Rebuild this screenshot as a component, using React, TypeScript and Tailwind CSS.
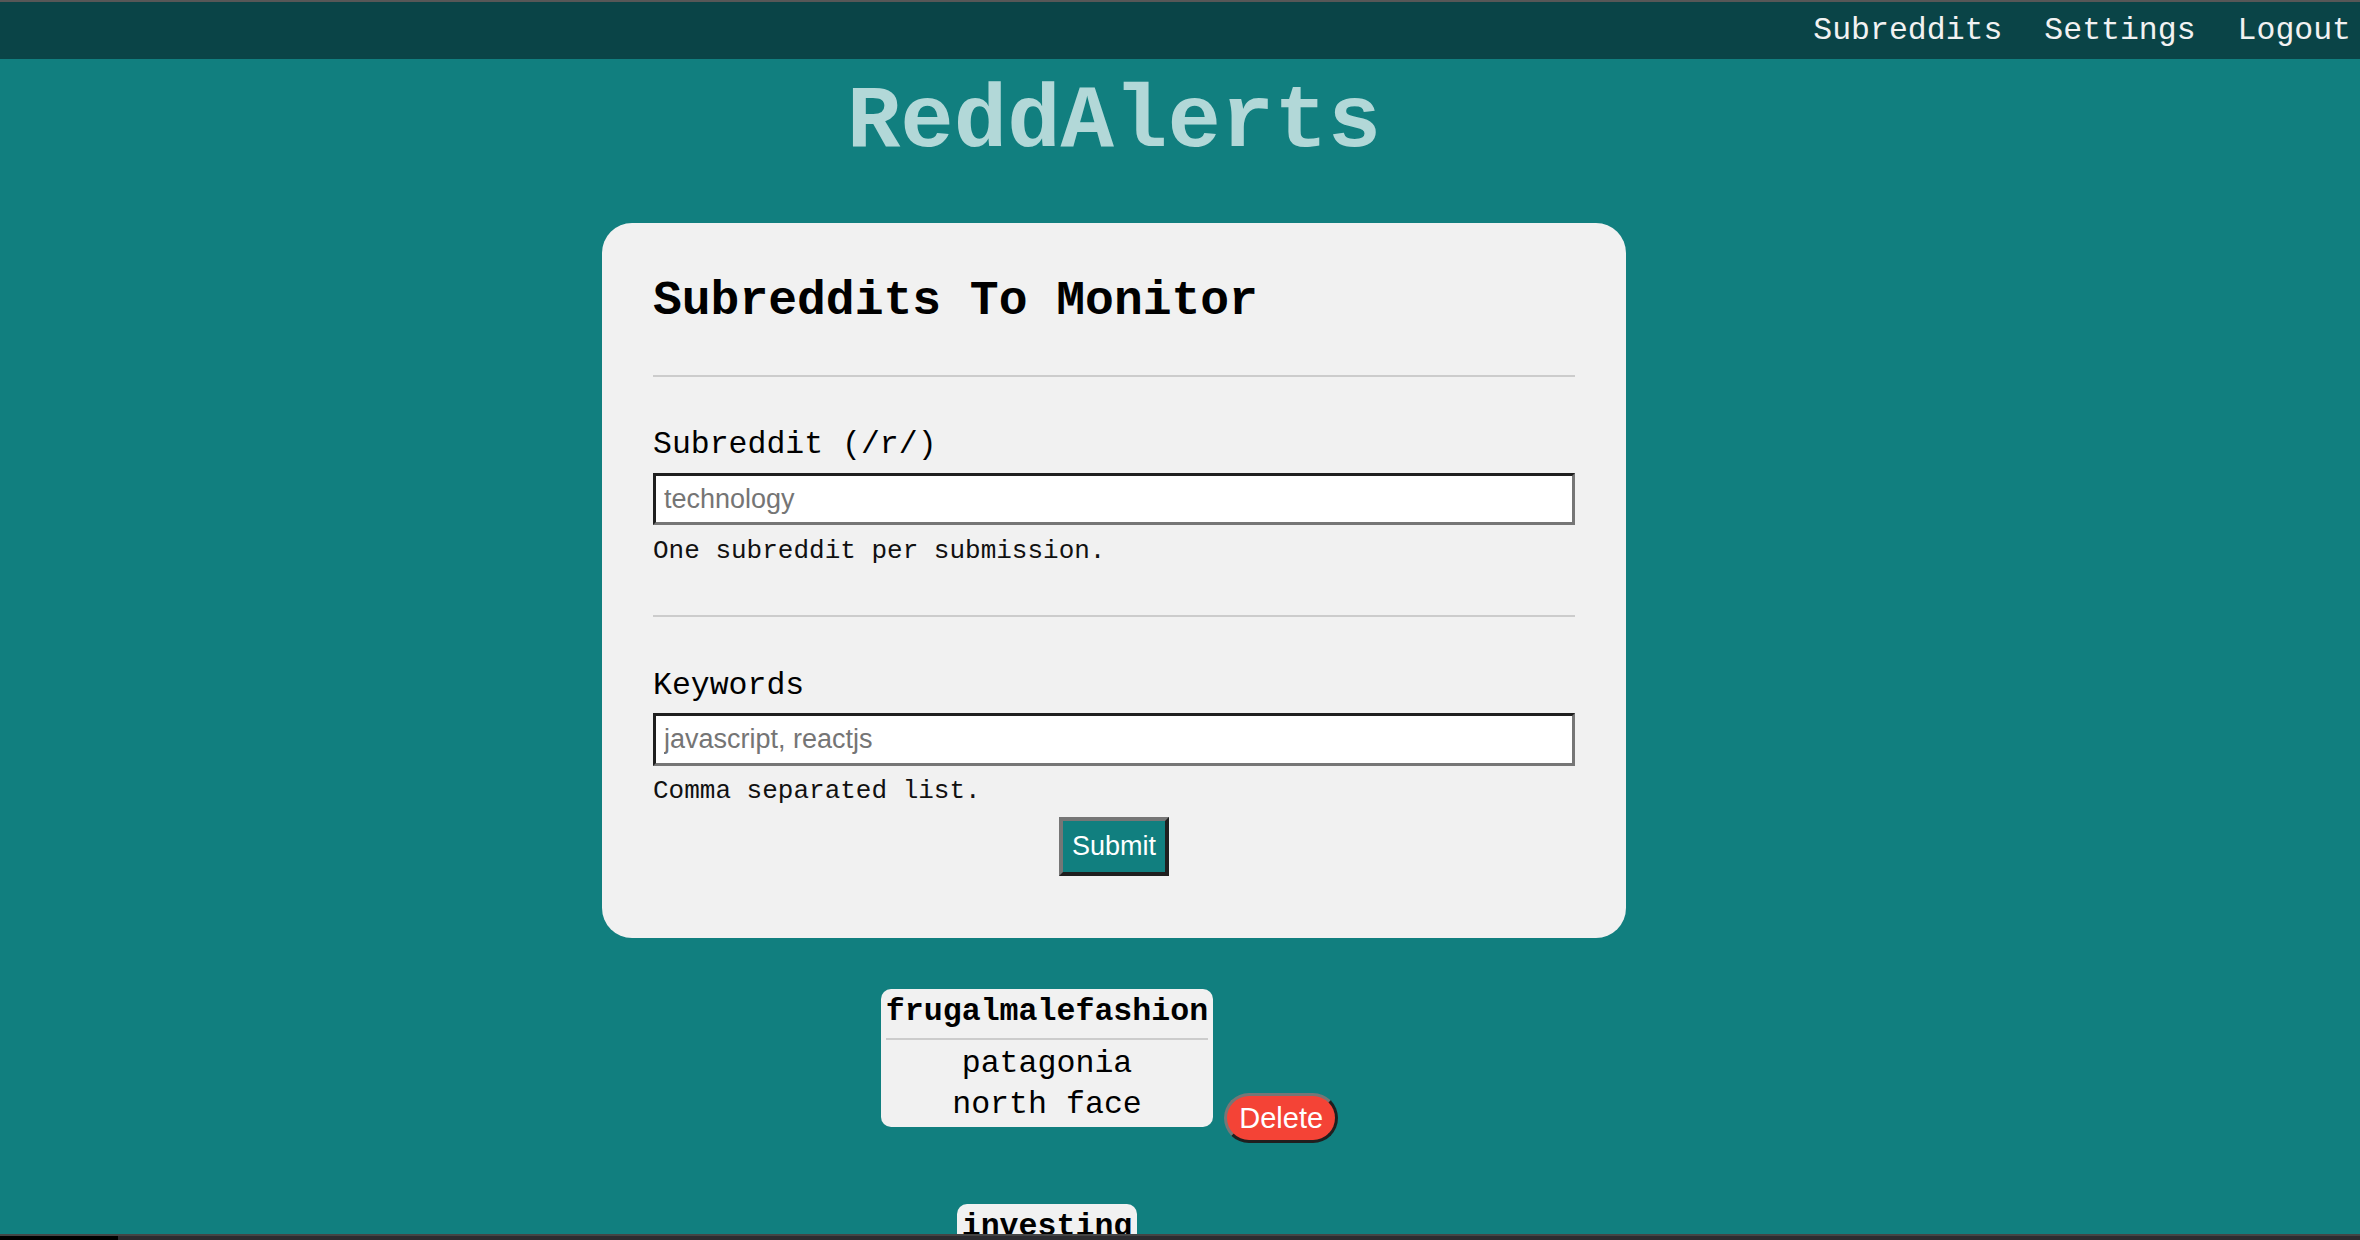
export default function App() {
  const groups = [
    { name: "frugalmalefashion", keywords: ["patagonia", "north face"] },
    { name: "investing", keywords: ["tesla", "apple"] },
  ];
  return (
    <div className="relative h-[1240px] overflow-hidden bg-[#117f7f] font-['Liberation_Mono','Courier_New',monospace] text-black">
      <div className="h-[2px] bg-[#575757]" />
      <header className="flex h-[57px] items-center justify-end gap-[42px] bg-[#0a4447] pr-[9px] text-[31.5px] leading-none text-[#f2f2f2]">
        <a className="cursor-pointer">Subreddits</a>
        <a className="cursor-pointer">Settings</a>
        <a className="cursor-pointer">Logout</a>
      </header>
      <main className="flex w-[2228px] flex-col items-center">
        <h1 className="mt-[19px] text-[89px] font-bold leading-[89px] text-[#b2d8d8]">ReddAlerts</h1>
        <form
          className="mt-[56px] flex w-[1024px] flex-col rounded-[30px] bg-[#f1f1f1] px-[51px] pb-[62px] pt-[54px]"
          onSubmit={(e) => e.preventDefault()}
        >
          <h2 className="text-[48px] font-bold leading-[48px]">Subreddits To Monitor</h2>
          <div className="mt-[50px] h-[2px] bg-[#cccccc]" />
          <label className="mt-[52px] text-[31.5px] leading-[32px]">Subreddit (/r/)</label>
          <input
            className="mt-[12px] h-[52px] w-full border-[3px] border-b-[#767676] border-l-[#1f1f1f] border-r-[#767676] border-t-[#1f1f1f] bg-white pl-[8px] font-['Liberation_Sans',Arial,sans-serif] text-[27px] outline-none placeholder:text-[#757575]"
            placeholder="technology"
          />
          <p className="mt-[13px] text-[26px] leading-[26px] text-[#111]">One subreddit per submission.</p>
          <div className="mt-[51px] h-[2px] bg-[#cccccc]" />
          <label className="mt-[53px] text-[31.5px] leading-[32px]">Keywords</label>
          <input
            className="mt-[11px] h-[53px] w-full border-[3px] border-b-[#767676] border-l-[#1f1f1f] border-r-[#767676] border-t-[#1f1f1f] bg-white pl-[8px] font-['Liberation_Sans',Arial,sans-serif] text-[27px] outline-none placeholder:text-[#757575]"
            placeholder="javascript, reactjs"
          />
          <p className="mt-[12px] text-[26px] leading-[26px] text-[#111]">Comma separated list.</p>
          <div className="mt-[13px] flex justify-center">
            <button
              type="submit"
              className="flex h-[59px] w-[110px] items-center justify-center border-[4px] border-b-[#1f1f1f] border-l-[#767676] border-r-[#1f1f1f] border-t-[#767676] bg-[#117f7f] font-['Liberation_Sans',Arial,sans-serif] text-[27px] leading-none text-white"
            >
              Submit
            </button>
          </div>
        </form>
        <div className="mt-[51px] flex flex-col items-center gap-[61px]">
          {groups.map((g) => (
            <div key={g.name} className="flex items-start">
              <div className="flex flex-col rounded-[10px] bg-[#f1f1f1] px-[5px] pb-[2px] pt-[7px] text-center">
                <div className="text-[31.6px] font-bold leading-[32px]">{g.name}</div>
                <div className="mt-[10px] h-[2px] bg-[#cccccc]" />
                <ul className="mt-[3px]">
                  {g.keywords.map((k) => (
                    <li key={k} className="text-[31.6px] leading-[41px]">
                      {k}
                    </li>
                  ))}
                </ul>
              </div>
              <button className="ml-[11px] mr-[9px] mt-[104px] flex h-[50px] w-[114px] items-center justify-center rounded-full border-[3px] border-b-[#1f1f1f] border-l-[#767676] border-r-[#1f1f1f] border-t-[#767676] bg-[#f44336] font-['Liberation_Sans',Arial,sans-serif] text-[29px] leading-none text-white">
                Delete
              </button>
            </div>
          ))}
        </div>
      </main>
      <div className="fixed bottom-0 left-0 flex h-[6px] w-full border-t-2 border-[#444444] bg-[#2c2c30]">
        <div className="h-full w-[118px] bg-black" />
      </div>
    </div>
  );
}
